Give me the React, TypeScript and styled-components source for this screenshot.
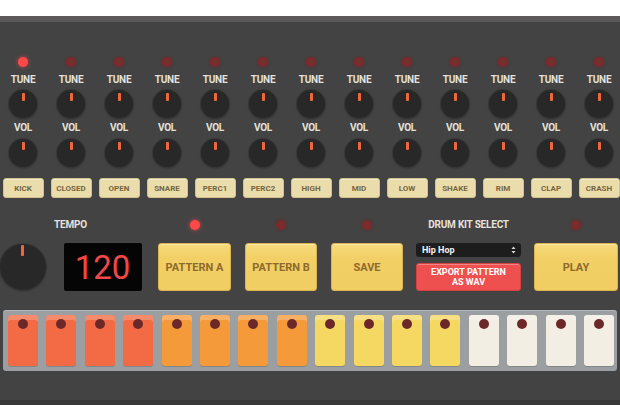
import React from "react";
import styled, { createGlobalStyle } from "styled-components";

const GlobalStyle = createGlobalStyle`
  html, body {
    margin: 0;
    padding: 0;
    background: #ffffff;
    font-family: Roboto, "Liberation Sans", Arial, sans-serif;
  }
`;

const Page = styled.div`
  width: 620px;
  height: 413px;
  padding-top: 16px;
  box-sizing: border-box;
  overflow: hidden;
`;

const Machine = styled.div`
  background: #444343;
  border-top: 6px solid #5b5959;
  border-bottom: 5px solid #393838;
  height: 389px;
  box-sizing: border-box;
`;

const ChannelStrip = styled.div`
  display: grid;
  grid-template-columns: repeat(13, 48px);
  margin-left: -1px;
  padding-top: 35px;
`;

const Channel = styled.div`
  display: flex;
  flex-direction: column;
  align-items: center;
`;

const Led = styled.div<{ $on?: boolean }>`
  width: 10px;
  height: 10px;
  border-radius: 50%;
  background: ${(p) => (p.$on ? "#ff4848" : "#7a2c2c")};
  box-shadow: ${(p) =>
    p.$on ? "0 0 4px rgba(255, 80, 80, 0.7)" : "0 0 3px rgba(120, 30, 30, 0.6)"};
`;

const Label = styled.div<{ $top?: number }>`
  margin-top: ${(p) => p.$top ?? 0}px;
  color: #e4e1dc;
  font-size: 10px;
  font-weight: 700;
  line-height: 12px;
  letter-spacing: -0.2px;
  white-space: nowrap;
`;

const KnobSlot = styled.div<{ $top: number }>`
  margin-top: ${(p) => p.$top}px;
`;

const Knob = styled.div<{ $size: number }>`
  position: relative;
  width: ${(p) => p.$size}px;
  height: ${(p) => p.$size}px;
  border-radius: 50%;
  background: #292828;
  box-shadow: 0 0 0 1px #383737, 0 1px 2px rgba(0, 0, 0, 0.4);

  &::after {
    content: "";
    position: absolute;
    left: 50%;
    top: ${(p) => (p.$size > 30 ? 1 : 3)}px;
    width: 3px;
    height: ${(p) => (p.$size > 30 ? 11 : 8)}px;
    margin-left: -1.5px;
    background: #f2663c;
    border-radius: 1px;
  }
`;

const PadButton = styled.div`
  width: 41px;
  height: 20px;
  margin-top: 11px;
  box-sizing: border-box;
  border-radius: 3px;
  background: #ebdcab;
  border: 1px solid #d3c28f;
  box-shadow: inset 0 1px 0 rgba(255, 255, 255, 0.4);
  color: #76663f;
  font-size: 8px;
  font-weight: 700;
  display: flex;
  align-items: center;
  justify-content: center;
`;

const ControlRow = styled.div`
  display: flex;
  align-items: flex-start;
  padding-top: 20px;
`;

const Group = styled.div<{ $width: number; $gap: number }>`
  width: ${(p) => p.$width}px;
  margin-left: ${(p) => p.$gap}px;
  display: flex;
  flex-direction: column;
  align-items: center;
`;

const GroupHead = styled.div`
  height: 14px;
  margin-bottom: 11px;
  display: flex;
  align-items: center;
  justify-content: center;
`;

const TempoBody = styled.div`
  display: flex;
  align-items: center;
  gap: 18px;
  height: 48px;
`;

const Display = styled.div`
  width: 78px;
  height: 48px;
  background: #050505;
  border-radius: 2px;
  color: #f04848;
  font-size: 33px;
  font-weight: 400;
  display: flex;
  align-items: center;
  justify-content: center;
`;

const BigButton = styled.div`
  width: 100%;
  height: 48px;
  box-sizing: border-box;
  border-radius: 3px;
  background: linear-gradient(#f6db7c, #f2d066 30%, #f1cd62);
  border: 1px solid #d8b550;
  box-shadow: inset 0 1px 0 rgba(255, 255, 255, 0.35);
  color: #8e6a2c;
  font-size: 11px;
  font-weight: 700;
  display: flex;
  align-items: center;
  justify-content: center;
`;

const KitStack = styled.div`
  width: 100%;
  display: flex;
  flex-direction: column;
  gap: 6px;
`;

const KitSelect = styled.div`
  height: 14px;
  border-radius: 3px;
  background: #1d1d1d;
  color: #f2f2f2;
  font-size: 9px;
  font-weight: 700;
  padding: 0 5px 0 6px;
  display: flex;
  align-items: center;
  justify-content: space-between;
`;

const ExportButton = styled.div`
  height: 28px;
  box-sizing: border-box;
  border-radius: 3px;
  background: #ee5050;
  border: 1px solid #d54040;
  box-shadow: inset 0 1px 0 rgba(255, 255, 255, 0.3);
  color: #ffffff;
  font-size: 9px;
  font-weight: 700;
  line-height: 10px;
  text-align: center;
  display: flex;
  align-items: center;
  justify-content: center;
`;

const Sequencer = styled.div`
  display: grid;
  grid-template-columns: repeat(16, 1fr);
  gap: 8.5px;
  margin: 19px 3px 0 3px;
  padding: 5px 3px 5px 5px;
  background: #9b9fa2;
  border-radius: 3px;
  box-shadow: inset 0 1px 0 rgba(255, 255, 255, 0.25);
`;

const STEP_COLORS = ["#f26b45", "#f59a3a", "#f4d861", "#f2eee3"];

const Step = styled.div<{ $color: string }>`
  height: 51px;
  border-radius: 3px;
  background: ${(p) => p.$color};
  box-shadow: inset 0 5px 0 rgba(255, 255, 255, 0.22), 0 1px 0 rgba(0, 0, 0, 0.15);
  display: flex;
  justify-content: center;
  padding-top: 4px;
  box-sizing: border-box;
`;

const StepDot = styled.div`
  width: 10px;
  height: 10px;
  border-radius: 50%;
  background: #6c2828;
`;

const Arrows = () => (
  <svg width="5" height="8" viewBox="0 0 5 8">
    <path d="M2.5 0.5 L4.5 3 H0.5 Z M2.5 7.5 L4.5 5 H0.5 Z" fill="#d8d8d8" />
  </svg>
);

const channels = [
  "KICK",
  "CLOSED",
  "OPEN",
  "SNARE",
  "PERC1",
  "PERC2",
  "HIGH",
  "MID",
  "LOW",
  "SHAKE",
  "RIM",
  "CLAP",
  "CRASH",
];

export default function App() {
  return (
    <Page>
      <GlobalStyle />
      <Machine>
        <ChannelStrip>
          {channels.map((name, i) => (
            <Channel key={name}>
              <Led $on={i === 0} />
              <Label $top={7}>TUNE</Label>
              <KnobSlot $top={4}>
                <Knob $size={28} />
              </KnobSlot>
              <Label $top={4}>VOL</Label>
              <KnobSlot $top={5}>
                <Knob $size={28} />
              </KnobSlot>
              <PadButton>{name}</PadButton>
            </Channel>
          ))}
        </ChannelStrip>

        <ControlRow>
          <Group $width={141} $gap={0}>
            <GroupHead>
              <Label>TEMPO</Label>
            </GroupHead>
            <TempoBody>
              <Knob $size={46} />
              <Display>120</Display>
            </TempoBody>
          </Group>
          <Group $width={73} $gap={17}>
            <GroupHead>
              <Led $on />
            </GroupHead>
            <BigButton>PATTERN A</BigButton>
          </Group>
          <Group $width={72} $gap={14}>
            <GroupHead>
              <Led />
            </GroupHead>
            <BigButton>PATTERN B</BigButton>
          </Group>
          <Group $width={72} $gap={14}>
            <GroupHead>
              <Led />
            </GroupHead>
            <BigButton>SAVE</BigButton>
          </Group>
          <Group $width={105} $gap={13}>
            <GroupHead>
              <Label>DRUM KIT SELECT</Label>
            </GroupHead>
            <KitStack>
              <KitSelect>
                Hip Hop
                <Arrows />
              </KitSelect>
              <ExportButton>
                EXPORT PATTERN
                <br />
                AS WAV
              </ExportButton>
            </KitStack>
          </Group>
          <Group $width={84} $gap={13}>
            <GroupHead>
              <Led />
            </GroupHead>
            <BigButton>PLAY</BigButton>
          </Group>
        </ControlRow>

        <Sequencer>
          {Array.from({ length: 16 }, (_, i) => (
            <Step key={i} $color={STEP_COLORS[Math.floor(i / 4)]}>
              <StepDot />
            </Step>
          ))}
        </Sequencer>
      </Machine>
    </Page>
  );
}
